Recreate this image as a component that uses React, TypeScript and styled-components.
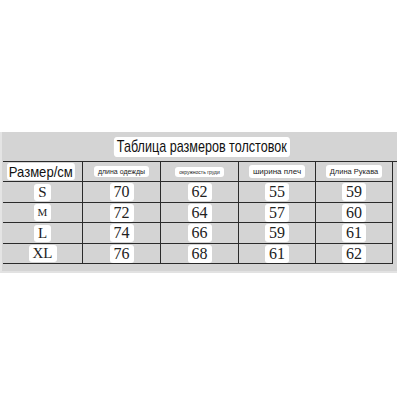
import styled, { createGlobalStyle } from "styled-components";

const GlobalStyle = createGlobalStyle`
  html, body {
    margin: 0;
    padding: 0;
    background: #ffffff;
  }
`;

const headers = [
  { text: "длина одежды", size: 7 },
  { text: "окружность груди", size: 5 },
  { text: "ширина плеч", size: 8 },
  { text: "Длина Рукава", size: 7.5 },
];

const rows = [
  { size: "S", values: [70, 62, 55, 59] },
  { size: "M", values: [72, 64, 57, 60] },
  { size: "L", values: [74, 66, 59, 61] },
  { size: "XL", values: [76, 68, 61, 62] },
];

export default function App() {
  return (
    <>
      <GlobalStyle />
      <Page>
        <Panel>
          <TitleRow>
            <Title>Таблица размеров толстовок</Title>
          </TitleRow>
          <Table>
            <Cell $height={20}>
              <MainHeader>Размер/см</MainHeader>
            </Cell>
            {headers.map((h) => (
              <Cell key={h.text} $height={20}>
                <SmallHeader $size={h.size}>{h.text}</SmallHeader>
              </Cell>
            ))}
            {rows.map((r, i) => (
              <Row key={r.size} size={r.size} values={r.values} height={i % 2 === 0 ? 21 : 20} />
            ))}
          </Table>
        </Panel>
      </Page>
    </>
  );
}

const Row = ({ size, values, height }: { size: string; values: number[]; height: number }) => (
  <>
    <Cell $height={height}>
      <SizeLabel $small={size === "M"}>{size}</SizeLabel>
    </Cell>
    {values.map((v, i) => (
      <Cell key={i} $height={height}>
        <Value>{v}</Value>
      </Cell>
    ))}
  </>
);

const Page = styled.div`
  width: 400px;
  height: 400px;
  padding-top: 132px;
  box-sizing: border-box;
`;

const Panel = styled.div`
  width: 397px;
  height: 141px;
  background: #d4d4d4;
  border-left: 2px solid #e4e4e4;
  border-bottom: 2px solid #e2e2e2;
  box-sizing: border-box;
  padding-left: 1px;
`;

const TitleRow = styled.div`
  height: 29px;
  display: flex;
  align-items: center;
  justify-content: center;
  padding-left: 4px;
`;

const Title = styled.span`
  background: #ffffff;
  border-radius: 4px;
  padding: 0 4px;
  font-family: "Liberation Sans", Arial, sans-serif;
  font-size: 17px;
  color: #111;
  transform: scaleX(0.74);
  white-space: nowrap;
`;

const Table = styled.div`
  display: grid;
  grid-template-columns: 80px 78px 78px 77px 77px;
  border-top: 1.5px solid #2a2a2a;
`;

const Cell = styled.div<{ $height: number }>`
  height: ${(p) => p.$height}px;
  display: flex;
  align-items: center;
  justify-content: center;
  border-bottom: 1.5px solid #2a2a2a;
  border-right: 1.5px solid #2a2a2a;
  box-sizing: border-box;
`;

const MainHeader = styled.span`
  background: #ffffff;
  border-radius: 3px;
  padding: 0 2px;
  font-family: "Liberation Sans", Arial, sans-serif;
  font-size: 15px;
  color: #111;
  transform: scaleX(0.87);
  white-space: nowrap;
  margin-right: 4px;
`;

const SmallHeader = styled.span<{ $size: number }>`
  background: #ffffff;
  border-radius: 3px;
  padding: 2px 4px;
  font-family: "Liberation Sans", Arial, sans-serif;
  font-size: ${(p) => p.$size}px;
  color: #222;
`;

const SizeLabel = styled.span<{ $small: boolean }>`
  background: #ffffff;
  border-radius: 3px;
  padding: 0 4px;
  font-family: "Liberation Serif", "Times New Roman", serif;
  font-size: ${(p) => (p.$small ? 11 : 15)}px;
  color: #222;
  line-height: 17px;
`;

const Value = styled.span`
  background: #ffffff;
  border-radius: 3px;
  padding: 0 4px;
  font-family: "Liberation Serif", "Times New Roman", serif;
  font-size: 16px;
  color: #222;
  line-height: 18px;
`;
